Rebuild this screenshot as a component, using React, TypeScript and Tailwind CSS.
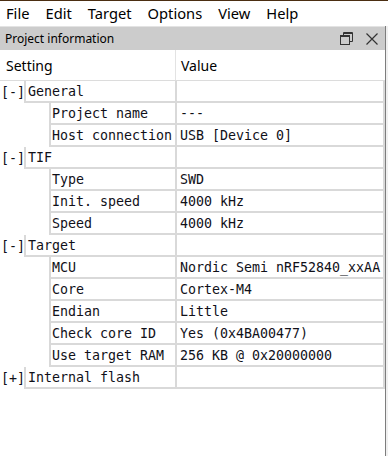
import type { ReactNode } from 'react'

type Row =
  | { kind: 'group'; open: boolean; label: string }
  | { kind: 'item'; label: string; value: string }

const rows: Row[] = [
  { kind: 'group', open: true, label: 'General' },
  { kind: 'item', label: 'Project name', value: '---' },
  { kind: 'item', label: 'Host connection', value: 'USB [Device 0]' },
  { kind: 'group', open: true, label: 'TIF' },
  { kind: 'item', label: 'Type', value: 'SWD' },
  { kind: 'item', label: 'Init. speed', value: '4000 kHz' },
  { kind: 'item', label: 'Speed', value: '4000 kHz' },
  { kind: 'group', open: true, label: 'Target' },
  { kind: 'item', label: 'MCU', value: 'Nordic Semi nRF52840_xxAA' },
  { kind: 'item', label: 'Core', value: 'Cortex-M4' },
  { kind: 'item', label: 'Endian', value: 'Little' },
  { kind: 'item', label: 'Check core ID', value: 'Yes (0x4BA00477)' },
  { kind: 'item', label: 'Use target RAM', value: '256 KB @ 0x20000000' },
  { kind: 'group', open: false, label: 'Internal flash' },
]

const menu = ['File', 'Edit', 'Target', 'Options', 'View', 'Help']

function Cell({ className, children }: { className: string; children?: ReactNode }) {
  return (
    <div className={`h-[22px] pt-[2px] border-b-2 border-[#d9d9d9] flex items-center whitespace-nowrap overflow-hidden ${className}`}>
      {children}
    </div>
  )
}

function TableRow({ row }: { row: Row }) {
  if (row.kind === 'group') {
    return (
      <div className="flex">
        <div className="w-[24px] h-[22px] pt-[2px] flex items-center pl-[1px]">{row.open ? '[-]' : '[+]'}</div>
        <Cell className="w-[153px] border-l-2 border-r-2 pl-[2px]">{row.label}</Cell>
        <Cell className="w-[208px] border-r-2" />
      </div>
    )
  }
  return (
    <div className="flex">
      <div className="w-[49px] h-[22px]" />
      <Cell className="w-[128px] border-l-2 border-r-2 pl-[1px]">{row.label}</Cell>
      <Cell className="w-[208px] border-r-2 pl-[3px]">{row.value}</Cell>
    </div>
  )
}

export default function App() {
  return (
    <div className="w-[388px] h-[456px] bg-[#f0f0f0] overflow-hidden flex flex-col">
      {/* Menu bar */}
      <div className="h-[26px] bg-white border-t border-[#4b2e12] flex items-center pl-[6px] gap-4 font-['Segoe_UI','Noto_Sans',sans-serif] text-[14.7px] text-black shrink-0">
        {menu.map(m => (
          <span key={m}>{m}</span>
        ))}
      </div>

      {/* Panel */}
      <div className="w-[386px] flex-1 flex flex-col bg-white border-r border-[#7d7d7d]">
        <div className="h-[24px] bg-[#cccccc] border-t border-[#e3e3e3] flex items-center justify-between pl-[5px] pr-[6px] shrink-0 font-['Noto_Sans',sans-serif] text-[12px] text-black">
          <span>Project information</span>
          <div className="flex items-center gap-[11px]">
            <svg width="15" height="15" viewBox="0 0 15 15" fill="none" stroke="#333" strokeWidth="1">
              <rect x="1.5" y="4.5" width="9" height="9" />
              <path d="M4.5 4.5 V1.5 H13.5 V10.5 H10.5" />
              <path d="M1.5 5.5 H10.5 M4.5 2.5 H13.5" />
            </svg>
            <svg width="14" height="14" viewBox="0 0 14 14" fill="none" stroke="#333" strokeWidth="1.2">
              <path d="M1.5 1.5 L12.5 12.5 M12.5 1.5 L1.5 12.5" />
            </svg>
          </div>
        </div>

        {/* Column header */}
        <div className="h-[31px] flex border-b border-[#dcdcdc] font-['Noto_Sans',sans-serif] text-[14px] text-black shrink-0">
          <div className="w-[176px] border-r border-[#e3e3e3] flex items-center pl-[6px]">Setting</div>
          <div className="flex-1 flex items-center pl-[5px]">Value</div>
        </div>

        {/* Rows */}
        <div className="font-['DejaVu_Sans_Mono',monospace] text-[13.3px] text-[#101018]">
          {rows.map((r, i) => (
            <TableRow key={i} row={r} />
          ))}
        </div>
      </div>
    </div>
  )
}
